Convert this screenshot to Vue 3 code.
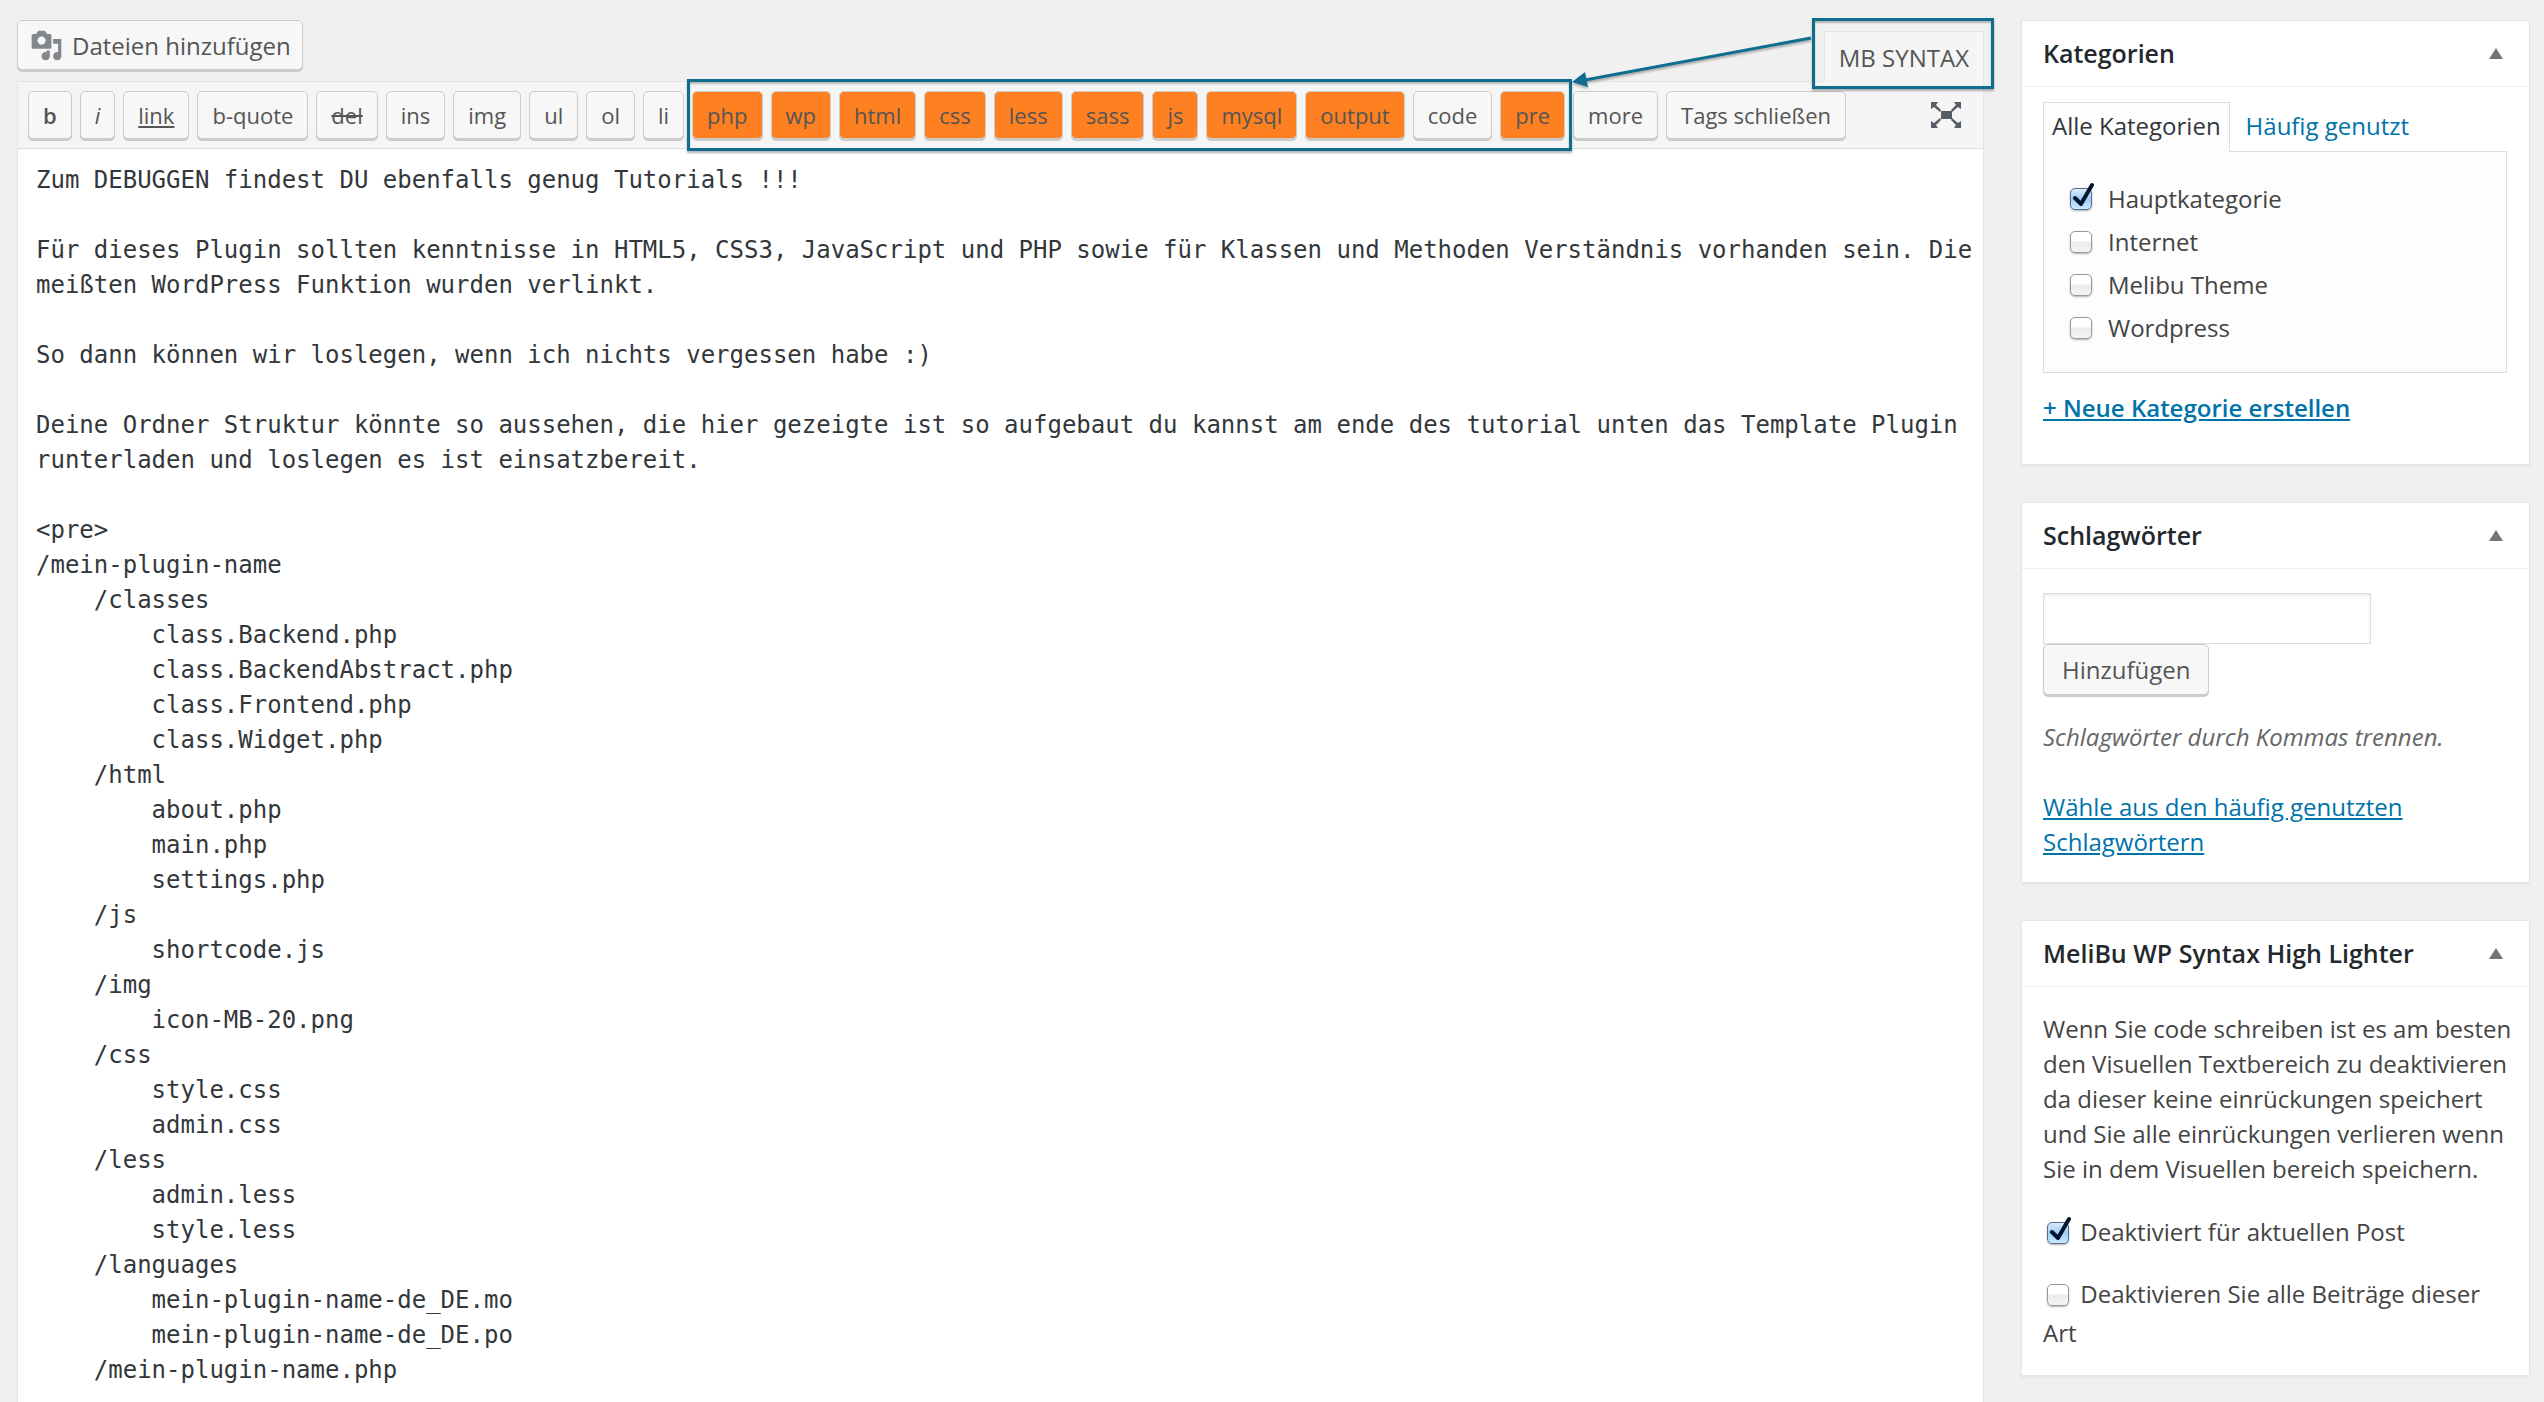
<script setup>
import { ref } from 'vue'

const before = [
  { label: 'b', kind: 'bold' },
  { label: 'i', kind: 'italic' },
  { label: 'link', kind: 'under' },
  { label: 'b-quote' },
  { label: 'del', kind: 'strike' },
  { label: 'ins' },
  { label: 'img' },
  { label: 'ul' },
  { label: 'ol' },
  { label: 'li' },
]
const syntax = [
  { label: 'php', kind: 'orange' },
  { label: 'wp', kind: 'orange' },
  { label: 'html', kind: 'orange' },
  { label: 'css', kind: 'orange' },
  { label: 'less', kind: 'orange' },
  { label: 'sass', kind: 'orange' },
  { label: 'js', kind: 'orange' },
  { label: 'mysql', kind: 'orange' },
  { label: 'output', kind: 'orange' },
  { label: 'code' },
  { label: 'pre', kind: 'orange' },
]
const after = ['more', 'Tags schließen']

const content = ref(`Zum DEBUGGEN findest DU ebenfalls genug Tutorials !!!

Für dieses Plugin sollten kenntnisse in HTML5, CSS3, JavaScript und PHP sowie für Klassen und Methoden Verständnis vorhanden sein. Die meißten WordPress Funktion wurden verlinkt.

So dann können wir loslegen, wenn ich nichts vergessen habe :)

Deine Ordner Struktur könnte so aussehen, die hier gezeigte ist so aufgebaut du kannst am ende des tutorial unten das Template Plugin runterladen und loslegen es ist einsatzbereit.

<pre>
/mein-plugin-name
    /classes
        class.Backend.php
        class.BackendAbstract.php
        class.Frontend.php
        class.Widget.php
    /html
        about.php
        main.php
        settings.php
    /js
        shortcode.js
    /img
        icon-MB-20.png
    /css
        style.css
        admin.css
    /less
        admin.less
        style.less
    /languages
        mein-plugin-name-de_DE.mo
        mein-plugin-name-de_DE.po
    /mein-plugin-name.php`)

const categories = ref([
  { name: 'Hauptkategorie', checked: true },
  { name: 'Internet', checked: false },
  { name: 'Melibu Theme', checked: false },
  { name: 'Wordpress', checked: false },
])
const tag = ref('')
const offPost = ref(true)
const offAll = ref(false)
</script>

<template>
  <div class="page">
    <main class="editor">
      <div class="top">
        <button type="button" class="btn media">
          <svg viewBox="0 0 20 20" aria-hidden="true">
            <path d="M13 11V4c0-.55-.45-1-1-1h-1.67L9 1H5L3.67 3H2c-.55 0-1 .45-1 1v7c0 .55.45 1 1 1h10c.55 0 1-.45 1-1zM7 4.5c1.38 0 2.5 1.12 2.5 2.5S8.38 9.5 7 9.5 4.5 8.38 4.5 7 5.62 4.5 7 4.5zM14 6h5v10.5c0 1.38-1.12 2.5-2.5 2.5S14 17.88 14 16.5s1.12-2.5 2.5-2.5c.17 0 .34.02.5.05V9h-3V6zm-4 8.05V13h2v3.5c0 1.38-1.12 2.5-2.5 2.5S7 17.88 7 16.5 8.12 14 9.5 14c.17 0 .34.02.5.05z" />
          </svg>
          Dateien hinzufügen
        </button>
        <div class="tab-wrap">
          <button type="button" class="tab">MB SYNTAX</button>
          <span class="frame tab-frame"></span>
        </div>
      </div>

      <div class="toolbar">
        <button v-for="b in before" :key="b.label" type="button" class="btn tool" :class="b.kind">{{ b.label }}</button>
        <div class="syntax">
          <button v-for="b in syntax" :key="b.label" type="button" class="btn tool" :class="b.kind">{{ b.label }}</button>
          <span class="frame syntax-frame"></span>
          <svg class="arrow" viewBox="0 0 242 56" aria-hidden="true">
            <path d="M240 7 14 49" fill="none" stroke="#0f6e8f" stroke-width="3" />
            <path d="M1 51 14 41 17 56z" fill="#0f6e8f" />
          </svg>
        </div>
        <button v-for="b in after" :key="b" type="button" class="btn tool">{{ b }}</button>
        <button type="button" class="full" aria-label="Vollbild">
          <svg viewBox="0 0 30 26" aria-hidden="true">
            <path d="M0 0h7L5 3l5 5-1 2-6-5-3 2zM30 0v7l-3-2-6 5-1-2 5-5-2-3zM0 26v-7l3 2 6-5 1 2-5 5 2 3zM30 26h-7l2-3-5-5 1-2 6 5 3-2zM10 9h11v8H10z" />
          </svg>
        </button>
      </div>

      <textarea v-model="content" class="text" aria-label="Inhalt" spellcheck="false"></textarea>
    </main>

    <aside class="side">
      <section class="card">
        <header><h2>Kategorien</h2><i class="tri"></i></header>
        <div class="body cats">
          <nav class="tabs">
            <a href="#alle" class="on">Alle Kategorien</a>
            <a href="#haeufig">Häufig genutzt</a>
          </nav>
          <div class="panel">
            <label v-for="c in categories" :key="c.name">
              <span class="check">
                <input v-model="c.checked" type="checkbox" />
                <svg v-if="c.checked" viewBox="0 0 24 28"><path d="M5 16 11 22 22 3" /></svg>
              </span>
              {{ c.name }}
            </label>
          </div>
          <a href="#neu" class="new">+ Neue Kategorie erstellen</a>
        </div>
      </section>

      <section class="card">
        <header><h2>Schlagwörter</h2><i class="tri"></i></header>
        <div class="body tags">
          <input v-model="tag" type="text" class="field" aria-label="Schlagwörter" />
          <button type="button" class="btn add">Hinzufügen</button>
          <p class="hint">Schlagwörter durch Kommas trennen.</p>
          <a href="#wolke">Wähle aus den häufig genutzten Schlagwörtern</a>
        </div>
      </section>

      <section class="card">
        <header><h2>MeliBu WP Syntax High Lighter</h2><i class="tri"></i></header>
        <div class="body lighter">
          <p>Wenn Sie code schreiben ist es am besten den Visuellen Textbereich zu deaktivieren da dieser keine einrückungen speichert und Sie alle einrückungen verlieren wenn Sie in dem Visuellen bereich speichern.</p>
          <label>
            <span class="check">
              <input v-model="offPost" type="checkbox" />
              <svg v-if="offPost" viewBox="0 0 24 28"><path d="M5 16 11 22 22 3" /></svg>
            </span>
            Deaktiviert für aktuellen Post
          </label>
          <label>
            <span class="check">
              <input v-model="offAll" type="checkbox" />
              <svg v-if="offAll" viewBox="0 0 24 28"><path d="M5 16 11 22 22 3" /></svg>
            </span>
            Deaktivieren Sie alle Beiträge dieser Art
          </label>
        </div>
      </section>
    </aside>
  </div>
</template>

<style>
body {
  background: #f0f0f0;
}
</style>

<style scoped>
* {
  box-sizing: border-box;
}
.page {
  display: flex;
  gap: 37px;
  height: 100vh;
  padding: 0 14px 0 17px;
  overflow: hidden;
  background: #f0f0f0;
  color: #444;
  font-family: "Open Sans", "Noto Sans", sans-serif;
  font-size: 24px;
  line-height: 35px;
}
button,
input {
  margin: 0;
  font: inherit;
}
a {
  color: #0073aa;
}
.editor {
  display: flex;
  flex: 1;
  flex-direction: column;
  min-width: 0;
}
.top {
  display: flex;
  align-items: flex-end;
  justify-content: space-between;
  height: 81px;
  flex: none;
}
.btn {
  border: 1px solid #ccc;
  border-radius: 5px;
  background: #f7f7f7;
  box-shadow: 0 2px 0 #ccc;
  color: #555;
  white-space: nowrap;
}
.media {
  display: flex;
  align-items: center;
  gap: 9px;
  height: 50px;
  margin-bottom: 11px;
  padding: 0 11px 0 12px;
}
.media svg {
  width: 33px;
  height: 33px;
  fill: #82878c;
}
.tab-wrap {
  position: relative;
  z-index: 1;
}
.tab {
  height: 51px;
  margin-bottom: -1px;
  display: block;
  padding: 0 14px;
  border: 1px solid #e5e5e5;
  border-bottom: 0;
  background: #f5f5f5;
  color: #555;
}
.frame {
  position: absolute;
  border: 3px solid #0f6e8f;
  box-shadow: 0 2px 2px rgba(0, 0, 0, 0.3), inset 0 2px 2px rgba(0, 0, 0, 0.25);
  pointer-events: none;
}
.tab-frame {
  inset: -13px -10px -8px -12px;
}
.toolbar {
  position: relative;
  display: flex;
  flex: none;
  gap: 8px;
  height: 67px;
  padding: 9px 22px 0 10px;
  border: 1px solid #e5e5e5;
  border-bottom: 0;
  background: #f5f5f5;
}
.tool {
  height: 48px;
  padding: 0 14px;
  font-size: 22px;
}
.bold {
  font-weight: 600;
}
.italic {
  font-style: italic;
}
.under {
  text-decoration: underline;
}
.strike {
  text-decoration: line-through;
}
.orange {
  background: #ff8020;
}
.syntax {
  position: relative;
  display: flex;
  gap: 8px;
}
.syntax-frame {
  inset: -12px -7px -3px -5px;
}
.full {
  width: 30px;
  height: 26px;
  margin: 11px 0 0 auto;
  padding: 0;
  border: 0;
  background: none;
}
.full svg {
  display: block;
  width: 30px;
  height: 26px;
  fill: #555d66;
}
.arrow {
  position: absolute;
  top: -60px;
  left: 100%;
  width: 242px;
  height: 56px;
  margin-left: 6px;
  filter: drop-shadow(0 2px 1px rgba(0, 0, 0, 0.3));
}
.text {
  flex: 1;
  display: block;
  width: 100%;
  margin: 0;
  padding: 14px 4px 0 18px;
  border: 1px solid #e5e5e5;
  border-top-color: #ddd;
  border-bottom: 0;
  outline: 0;
  overflow: hidden;
  resize: none;
  background: #fff;
  color: #32373c;
  font: 24px/35px "DejaVu Sans Mono", monospace;
}
.side {
  display: flex;
  flex: none;
  flex-direction: column;
  gap: 37px;
  width: 509px;
  padding-top: 20px;
}
.card {
  border: 1px solid #e5e5e5;
  background: #fff;
  box-shadow: 0 2px 2px rgba(0, 0, 0, 0.04);
}
.card header {
  display: flex;
  align-items: center;
  justify-content: space-between;
  height: 66px;
  padding: 0 26px 0 21px;
  border-bottom: 1px solid #eee;
}
h2 {
  margin: 0;
  color: #23282d;
  font-size: 25px;
  font-weight: 600;
}
.tri {
  border: 7px solid transparent;
  border-top: 0;
  border-bottom: 11px solid #72777c;
}
.body {
  display: flex;
  flex-direction: column;
  align-items: flex-start;
  padding: 0 22px 0 21px;
}
.cats {
  padding-top: 15px;
  padding-bottom: 39px;
}
.tabs {
  display: flex;
  position: relative;
  z-index: 1;
}
.tabs a {
  height: 50px;
  margin-bottom: -1px;
  padding: 6px 16px;
  text-decoration: none;
}
.tabs .on {
  padding: 5px 8px;
  border: 1px solid #ddd;
  border-bottom: 0;
  background: #fdfdfd;
  color: #32373c;
}
.panel {
  display: flex;
  flex-direction: column;
  gap: 8px;
  align-self: stretch;
  height: 222px;
  padding: 29px 26px;
  border: 1px solid #ddd;
  background: #fdfdfd;
}
.panel label {
  display: flex;
  align-items: center;
  gap: 15px;
}
.check {
  position: relative;
  display: inline-block;
  width: 23px;
  height: 22px;
  line-height: 0;
}
.check input {
  appearance: none;
  width: 22px;
  height: 22px;
  border: 1px solid #999;
  border-radius: 5px;
  background: linear-gradient(#fff 45%, #ebebeb 50%, #f4f4f4);
  box-shadow: 0 1px 2px rgba(0, 0, 0, 0.3);
}
.check input:checked {
  border-color: #5d6a8c;
  background: linear-gradient(#d8eafb, #9fcdf5 50%, #c8ecff);
}
.check svg {
  position: absolute;
  left: 0;
  top: -6px;
  width: 24px;
  height: 28px;
  fill: none;
  stroke: #04152f;
  stroke-width: 4;
  stroke-linecap: round;
  stroke-linejoin: round;
  pointer-events: none;
}
.new {
  margin-top: 17px;
  font-weight: 600;
}
.tags {
  padding-top: 24px;
  padding-bottom: 23px;
}
.field {
  width: 328px;
  height: 51px;
  padding: 0 8px;
  border: 1px solid #ddd;
  outline: 0;
  background: #fff;
  box-shadow: inset 0 2px 3px rgba(0, 0, 0, 0.07);
}
.add {
  height: 51px;
  padding: 0 18px;
}
.hint {
  margin: 24px 0 35px;
  color: #666;
  font-style: italic;
}
.lighter {
  padding: 24px 16px 23px 21px;
}
.lighter p {
  margin: 0 0 26px;
}
.lighter label {
  display: block;
  margin-bottom: 23px;
  line-height: 39px;
}
.lighter label:last-child {
  margin-bottom: 0;
}
.lighter .check {
  margin: 0 4px;
  vertical-align: -3px;
}
</style>
